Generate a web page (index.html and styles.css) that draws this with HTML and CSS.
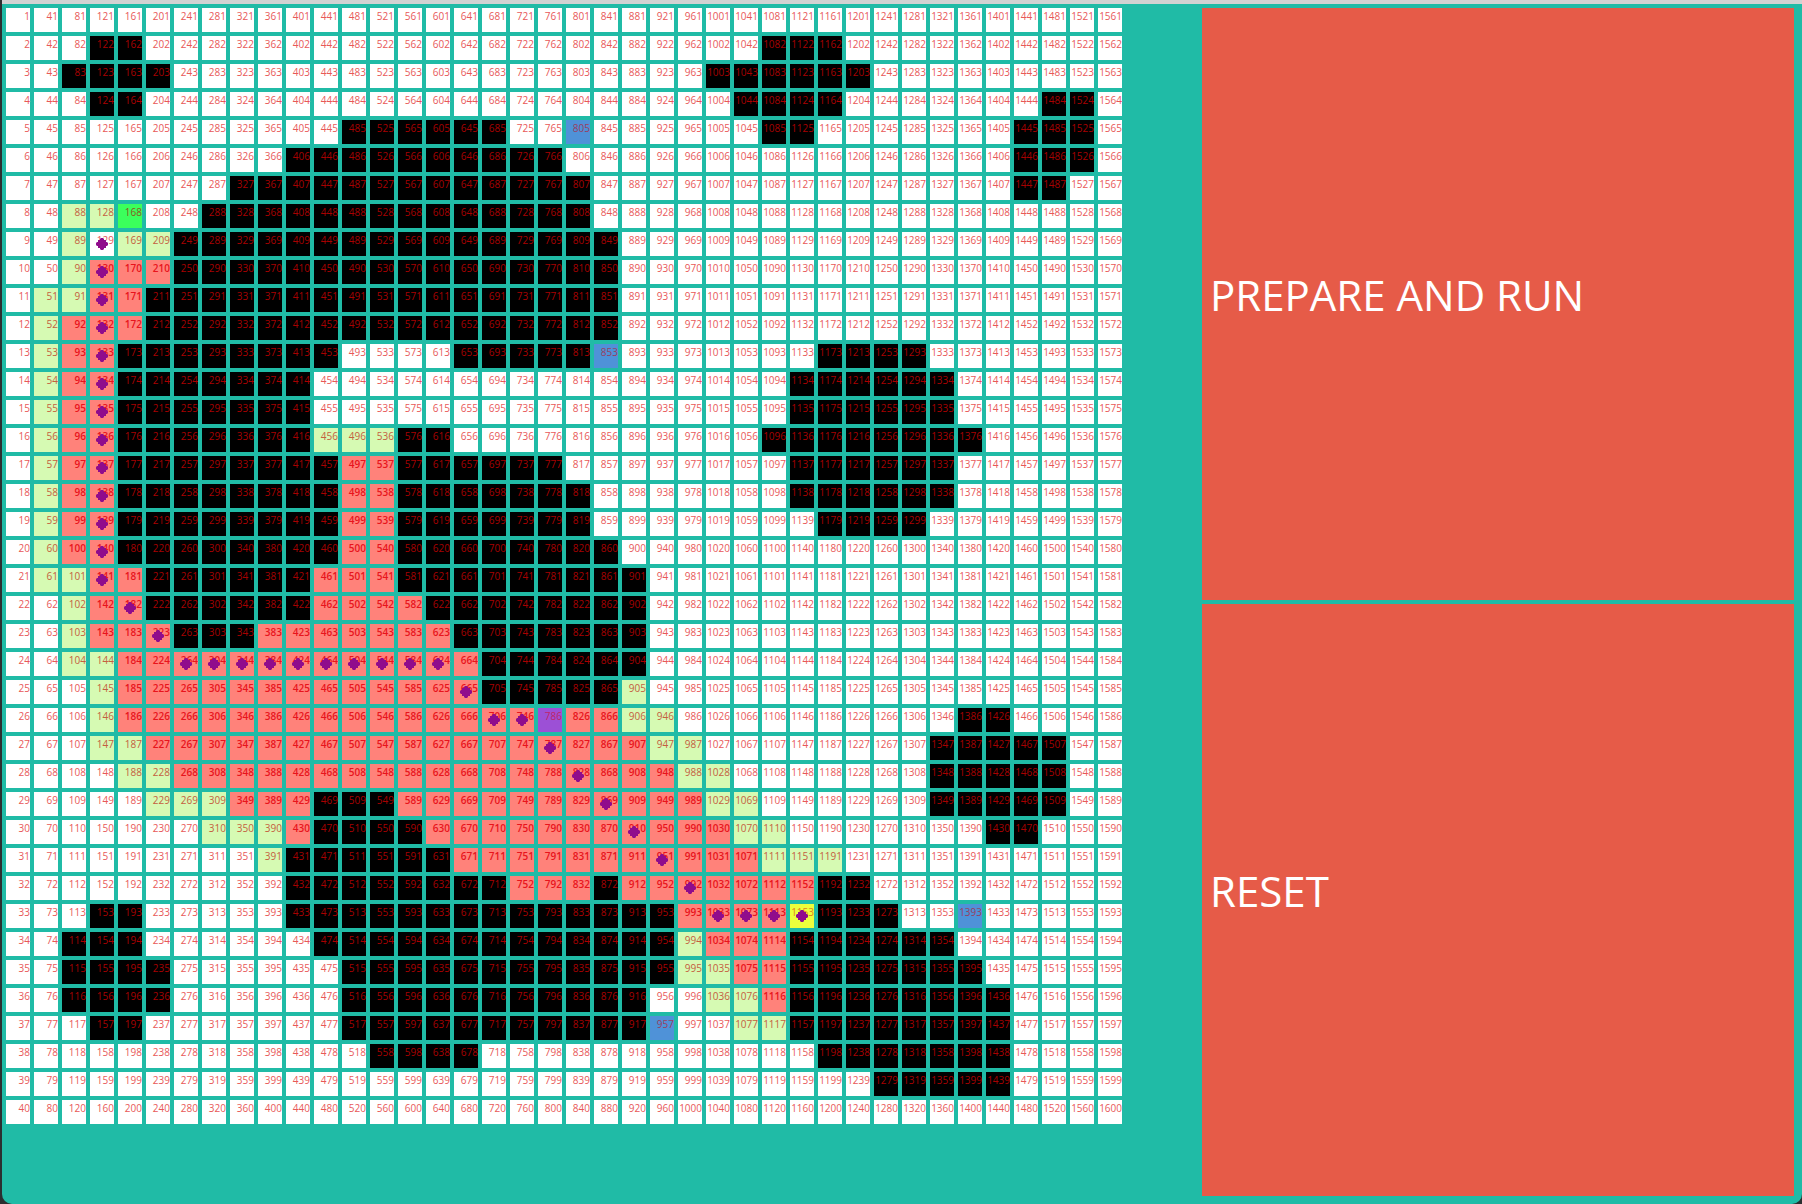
FILE: index.html
```
<!DOCTYPE html>
<html lang="en">
<head>
<meta charset="utf-8">
<title>Path finder</title>
<link rel="stylesheet" href="styles.css">
</head>
<body>
<main class="window">
  <section class="board-pane">
    <div class="board" id="board"></div>
  </section>
  <section class="actions">
    <button class="action" type="button">PREPARE AND RUN</button>
    <button class="action" type="button">RESET</button>
  </section>
</main>
<script src="board.js"></script>
</body>
</html>
```
FILE: styles.css
```
* {
  box-sizing: border-box;
}

body {
  margin: 0;
  min-height: 100vh;
  display: flex;
  padding-left: 2px;
  background: #2b2f30;
}

.window {
  flex: 1;
  display: grid;
  grid-template-columns: 2fr 1fr;
  border-top: 4px solid #d2d2d2;
  border-radius: 0 0 10px 10px;
  background: #20bba6;
}

.board-pane {
  padding: 4px;
}

.board {
  display: grid;
  grid-template-rows: repeat(40, 24px);
  grid-auto-columns: 24px;
  grid-auto-flow: column;
  gap: 4px;
}

.cell {
  display: grid;
  justify-items: end;
  background: #fff;
  color: #e85858;
  font: 10px/16px "Open Sans", sans-serif;
}

.cell > * {
  grid-area: 1 / 1;
}

.wall {
  background: #000;
  color: #a80000;
}

.open {
  background: #d6fab3;
  color: #c46040;
}

.closed {
  background: #ff827a;
  color: #e8141c;
  font-weight: 600;
}

.start {
  background: #3bff5c;
  color: #8a5a20;
}

.goal {
  background: #edff3c;
  color: #e0801c;
}

.point {
  background: #4f92d8;
  color: #983f62;
}

.current {
  background: #9c50d6;
  color: #c02468;
}

.marker {
  width: 12px;
  height: 12px;
  place-self: center;
  background: #900c8c;
  clip-path: polygon(5px 0, 7px 0, 8px 1px, 8px 2px, 10px 2px, 10px 4px, 11px 4px, 12px 5px, 12px 7px, 11px 8px, 10px 8px, 10px 10px, 8px 10px, 8px 11px, 7px 12px, 5px 12px, 4px 11px, 4px 10px, 2px 10px, 2px 8px, 1px 8px, 0 7px, 0 5px, 1px 4px, 2px 4px, 2px 2px, 4px 2px, 4px 1px);
}

.actions {
  display: grid;
  grid-auto-rows: 1fr;
  gap: 4px;
  padding: 4px 8px 8px 0;
}

.action {
  border: 0;
  padding: 0 8px 20px;
  background: #e65b48;
  color: #fff;
  font: 500 42px "Open Sans", sans-serif;
  text-align: left;
}
```
FILE: board.js
```
const SIZE = 40;

// Column ranges per row; rows count from 1, columns from 0.
const walls = {
  2: "3-4 27-29", 3: "2-5 25-30", 4: "3-4 26-29 37-38", 5: "12-17 27-28 36-38",
  6: "10-19 36-38", 7: "8-20 36-37", 8: "7-20", 9: "6-21", 10: "6-21",
  11: "5-21", 12: "5-21", 13: "4-11 16-20 29-32", 14: "4-10 28-33",
  15: "4-10 28-33", 16: "4-10 14-15 27-34", 17: "4-11 14-19 28-33",
  18: "4-11 14-20 28-33", 19: "4-11 14-20 29-32", 20: "4-11 14-21",
  21: "5-10 14-22", 22: "5-10 15-22", 23: "6-8 16-22", 24: "17-22",
  25: "17-21", 26: "34-35", 27: "33-37", 28: "33-37", 29: "11-13 33-37",
  30: "11-14 35-36", 31: "10-15", 32: "10-17 21 29-30",
  33: "3-4 10-23 29-31", 34: "2-4 11-23 28-33", 35: "2-5 12-23 28-34",
  36: "2-5 12-22 28-35", 37: "3-4 12-22 28-35", 38: "13-16 29-35", 39: "31-35"
};

const open = {
  8: "2-3", 9: "2 4-5", 10: "2", 11: "1-2", 12: "1", 13: "1", 14: "1",
  15: "1", 16: "1 11-13", 17: "1", 18: "1", 19: "1", 20: "1", 21: "1-2",
  22: "2", 23: "2", 24: "2-3", 25: "3 22", 26: "3 22-23", 27: "3-4 23-24",
  28: "4-5 24-25", 29: "5-7 25-26", 30: "7-9 26-27", 31: "9 27-29",
  34: "24", 35: "24-25", 36: "25-26", 37: "26-27"
};

const closed = {
  10: "3-5", 11: "3-4", 12: "2-4", 13: "2-3", 14: "2-3", 15: "2-3",
  16: "2-3", 17: "2-3 12-13", 18: "2-3 12-13", 19: "2-3 12-13",
  20: "2-3 12-13", 21: "3-4 11-13", 22: "3-4 11-14", 23: "3-5 9-15",
  24: "4-16", 25: "4-16", 26: "4-21", 27: "5-22", 28: "6-23",
  29: "8-10 14-24", 30: "10 15-25", 31: "16-26", 32: "18-20 22-28",
  33: "24-27", 34: "25-27", 35: "26-27", 36: "27"
};

const path = {
  9: "3", 10: "3", 11: "3", 12: "3", 13: "3", 14: "3", 15: "3", 16: "3",
  17: "3", 18: "3", 19: "3", 20: "3", 21: "3", 22: "4", 23: "5", 24: "6-15",
  25: "16", 26: "17-18", 27: "19", 28: "20", 29: "21", 30: "22", 31: "23",
  32: "24", 33: "25-28"
};

const special = {
  168: "start", 1153: "goal", 786: "current",
  805: "point", 853: "point", 957: "point", 1393: "point"
};

function numbers(rows) {
  const found = new Set();
  for (const [row, ranges] of Object.entries(rows)) {
    for (const range of ranges.split(" ")) {
      const [from, to = from] = range.split("-").map(Number);
      for (let col = from; col <= to; col++) found.add(col * SIZE + Number(row));
    }
  }
  return found;
}

const kinds = { wall: numbers(walls), open: numbers(open), closed: numbers(closed) };
const steps = numbers(path);
const board = document.getElementById("board");

for (let n = 1; n <= SIZE * SIZE; n++) {
  const kind = special[n] || Object.keys(kinds).find((name) => kinds[name].has(n));
  const cell = document.createElement("div");
  cell.className = kind ? `cell ${kind}` : "cell";
  const label = document.createElement("span");
  label.textContent = n;
  cell.append(label);
  if (steps.has(n)) {
    const marker = document.createElement("i");
    marker.className = "marker";
    cell.append(marker);
  }
  board.append(cell);
}
```
